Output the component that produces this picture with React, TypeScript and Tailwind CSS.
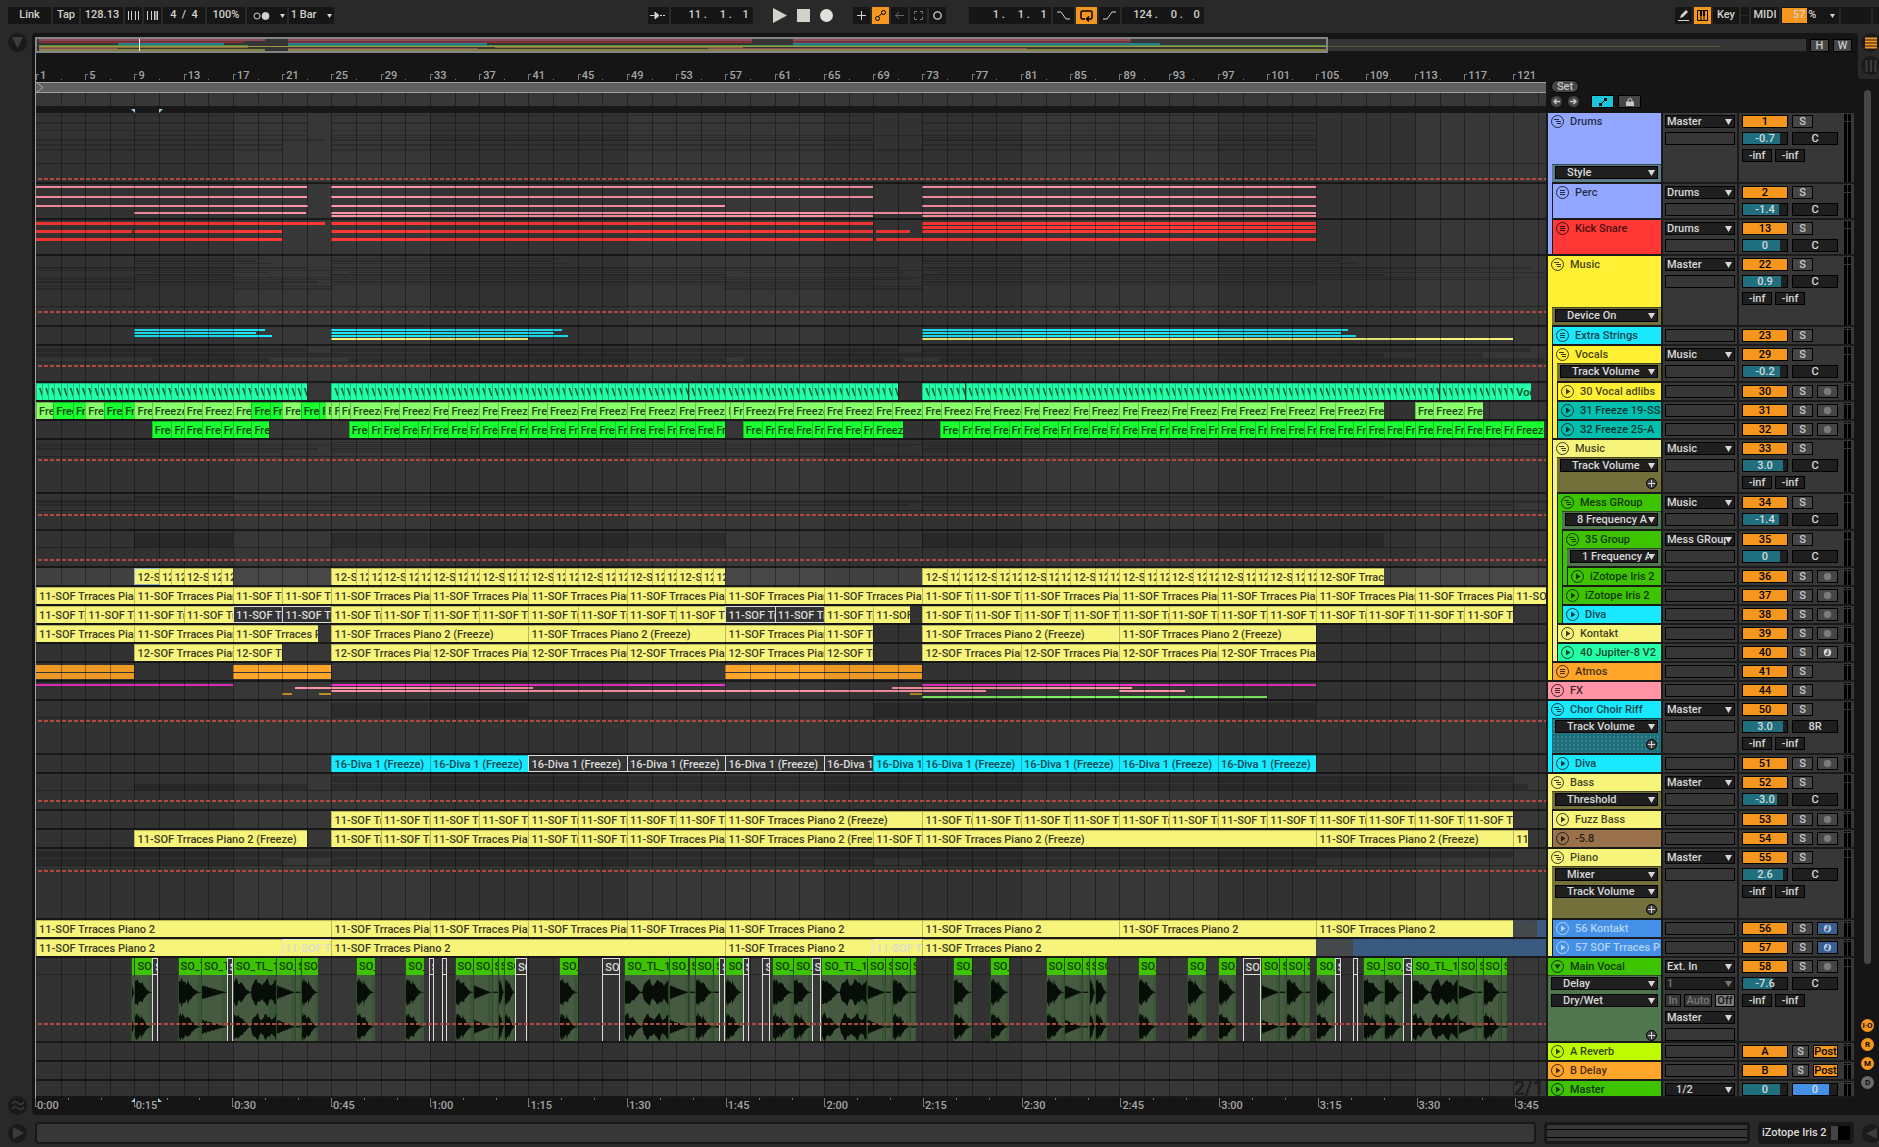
import { ReactNode } from "react";
import clsx from "clsx";

const BARS = 122.65;
const END = BARS + 1;
const pct = (bars: number) => `${(bars / BARS) * 100}%`;
const span = (a: number, b: number) => ({ left: pct(a - 1), width: pct(b - a) });

// short clips only carry the first letters of their name
const fit = (label: string, bars: number) => label.slice(0, Math.ceil(bars * 2.600));

interface Clip {
  a: number;
  b: number;
  label: string;
  tone: string;
}

interface Strip {
  y: number;
  h: number;
  color: string;
  ranges: number[];
}

interface Track {
  name: string;
  num: string;
  depth: number;
  height: string;
  color: string;
  bar?: string;
  icon: "group" | "list" | "play" | "down";
  isGroup?: boolean;
  text?: string;
  auto?: string[];
  autoBg?: string;
  autoTop?: number;
  plus?: boolean;
  line?: number;
  out?: string;
  vol?: string;
  fill?: number;
  pan?: string;
  inf?: boolean;
  arm?: "off" | "note" | "blue";
  kind?: "vocal" | "return" | "master";
  selected?: boolean;
  strips?: Strip[];
  clips?: Clip[];
}

const steps = (a: number, b: number, n: number) => {
  const out: number[] = [];
  for (let x = a; x < b; x += n) out.push(x);
  out.push(b);
  return out;
};

const repeat = (a: number, b: number, offsets: number[], every = 4) => {
  const out: number[] = [];
  for (let x = a; x < b; x += every) {
    offsets.forEach((o) => x + o < b && out.push(x + o));
  }
  out.push(b);
  return out;
};

const run = (label: string, tone: string, bounds: number[]): Clip[] =>
  bounds.slice(1).map((b, i) => ({ a: bounds[i], b, label, tone }));

const st = (color: string, y: number, h: number, ...ranges: number[]): Strip => ({ y, h, color, ranges });

const YELLOW = "bg-[#f7f47c] border-[#b9b65a] text-[#3c3b1c]";
const MINT = "bg-[#22ffa8] border-[#1abf7e] text-[#0b4630]";
const LIME = "bg-[#88ff6a] border-[#62bd4b] text-[#1f4716]";
const NEON = "bg-[#1aff2f] border-[#12bb22] text-[#07430d]";
const CYAN = "bg-[#19e9ff] border-[#12a9ba] text-[#084a52]";
const MUTED = "bg-[#343434] border-[#dcdcdc] border-b text-[#dcdcdc]";
const GHOST = "bg-[#f7f47c] border-[#e2e2e2] text-[#dcdcd0]";
const FROZEN = "bg-[#3a5a80] border-[#3a5a80]";
const HATCH =
  "border-[#3a4658] bg-[repeating-linear-gradient(135deg,#3f4853_0px,#3f4853_3px,#4a4a45_3px,#4a4a45_6px)]";

const DARK = "bg-black/20";
const PINK = "bg-[#ff94a6]";
const RED = "bg-[#ff3836]";
const SKY = "bg-[#19e9ff]";
const ORANGE = "bg-[#ffa529]";
const MAGENTA = "bg-[#f032c8]";

const P11 = "11-SOF Trraces Piano 2 (Freeze)";
const P12 = "12-SOF Trraces Piano 2 (Freeze)";
const PIANO = "11-SOF Trraces Piano 2";

const bgYellow = "bg-[#fff034]";
const bgPale = "bg-[#f7f47c]";
const bgGreen = "bg-[#3dc300]";
const bgCyan = "bg-[#19e9ff]";
const olive = "bg-[#73703b]";

const tracks: Track[] = [
  {
    name: "Drums", num: "1", depth: 0, height: "h-[71px]", color: "bg-[#92a7ff]", icon: "group", isGroup: true,
    auto: ["Style"], autoBg: "bg-[#5b7c8a]", autoTop: 51, line: 65, out: "Master", vol: "-0.7", fill: 84, pan: "C", inf: true,
    strips: [
      st(DARK, 2, 1, 1, 23, 25, 69, 73, 105),
      st(DARK, 9, 2, 1, 23, 25, 69, 73, 105),
      st(DARK, 17, 1, 1, 23.1, 25, 57, 73, 105),
      st(DARK, 22, 1, 9, 22.9, 25, 105),
      st(DARK, 24, 1, 25, 69, 73, 105),
      st(DARK, 26, 2, 1, 24.5, 25, 69, 73, 105),
      st(DARK, 31, 2, 1, 8.8, 9, 21, 25, 69, 73, 105),
      st(DARK, 36, 2, 1, 21, 25, 69, 69.2, 105),
    ],
  },
  {
    name: "Perc", num: "2", depth: 1, height: "h-[36px]", color: "bg-[#92a7ff]", icon: "list",
    out: "Drums", vol: "-1.4", fill: 82, pan: "C",
    strips: [
      st(PINK, 2, 2, 1, 23, 25, 69, 73, 105),
      st(PINK, 12, 2, 1, 23, 25, 69, 73, 105),
      st(PINK, 21, 2, 1, 23.1, 25, 57, 73, 105),
      st(PINK, 28, 2, 9, 22.9, 25, 105),
      st(PINK, 31, 2, 25, 69, 73, 105),
    ],
  },
  {
    name: "Kick Snare", num: "13", depth: 1, height: "h-[36px]", color: "bg-[#ff3836]", icon: "list",
    out: "Drums", vol: "0", fill: 84, pan: "C",
    strips: [
      st(RED, 2, 3, 1, 24.5, 25, 69, 73, 105),
      st(RED, 6, 3, 73, 105),
      st(RED, 10, 3, 1, 8.8, 9, 21, 25, 69, 69.25, 72, 73, 105),
      st(RED, 18, 3, 1, 21, 25, 69, 69.25, 105),
    ],
  },
  {
    name: "Music", num: "22", depth: 0, height: "h-[71px]", color: bgYellow, icon: "group", isGroup: true,
    auto: ["Device On"], autoBg: olive, autoTop: 51, line: 55, out: "Master", vol: "0.9", fill: 86, pan: "C", inf: true,
    strips: [
      st(DARK, 2, 1, 9, 19.6, 25, 43.7, 73, 107.6),
      st(DARK, 4, 2, 9, 18.9, 25, 43.1, 73, 107),
      st(DARK, 7, 1, 9, 20.2, 25, 44.2, 73, 108.2),
      st(DARK, 11, 2, 1, 23, 25, 71, 73, 122.4),
      st(DARK, 14, 1, 1, 110.5, 113, 118.5),
      st(DARK, 16, 1, 10.4, 19.9, 26.4, 57, 58.4, 71.4, 74.4, 123.5),
      st(DARK, 18, 2, 9, 17, 25, 57, 73, 110.5),
      st(DARK, 21, 1, 1, END),
      st(DARK, 23, 1, 1, 72, 73, 121),
      st(DARK, 25, 2, 1, 23.9, 25, 69, 73, 105),
      st(DARK, 28, 1, 9, 21, 25, 69, 73, 105),
      st(DARK, 30, 1, 1, 9, 17, 25, 57, 73),
      st(DARK, 32, 2, 1, 9, 17, 25, 57, 73),
    ],
  },
  {
    name: "Extra Strings", num: "23", depth: 1, height: "h-[19px]", color: bgCyan, icon: "list",
    strips: [
      st(SKY, 2, 2, 9, 19.6, 25, 43.7, 73, 107.6),
      st(SKY, 5, 2, 9, 18.9, 25, 43.1, 73, 107),
      st(SKY, 8, 2, 9, 20.2, 25, 44.2, 73, 108.2),
      st("bg-[#f7f47c]", 11, 2, 25, 41, 73, 121),
    ],
  },
  {
    name: "Vocals", num: "29", depth: 1, height: "h-[37px]", color: bgYellow, icon: "group", isGroup: true,
    auto: ["Track Volume"], autoBg: olive, line: 19, out: "Music", vol: "-0.2", fill: 84, pan: "C",
    strips: [
      st(DARK, 2, 4, 1, 23, 25, 71, 73, 122.4),
      st(DARK, 7, 4, 1, 110.5, 113, 118.5),
      st(DARK, 12, 4, 10.4, 19.9, 26.4, 57, 58.4, 71.4, 74.4, 123.5),
    ],
  },
  {
    name: "30 Vocal adlibs", num: "30", depth: 2, height: "h-[19px]", color: bgYellow, icon: "play", arm: "off",
    clips: [
      ...run("Vocal", MINT, steps(1, 23, 0.5)),
      ...run("Vocal", MINT, steps(25, 71, 0.5)),
      ...run("Vocal", MINT, steps(73, 121, 0.5)),
      ...run("Vocal", MINT, [121, 122.4]),
    ],
  },
  {
    name: "31 Freeze 19-SS", num: "31", depth: 2, height: "h-[19px]", color: "bg-[#00bfaf]", icon: "play", arm: "off",
    clips: [
      ...run("Freeze 19", LIME, [1, 2.4]),
      ...run("Freeze 19", NEON, [2.4, 4, 5]),
      ...run("Freeze 19", LIME, [5, 6.5]),
      ...run("Freeze 19", NEON, [6.5, 8, 9]),
      ...run("Freeze 19", LIME, [9, 10.4, 13, 14.5, 17, 18.5]),
      ...run("Freeze 19", NEON, [18.5, 20, 21]),
      ...run("Freeze 19", LIME, [21, 22.5]),
      ...run("Freeze 19", NEON, [22.5, 24, 24.5]),
      ...run("Freeze 19", LIME, [24.5, 25, 25.6, 26.5]),
      ...run("Freeze 19", LIME, [26.5, ...repeat(29, 57, [0, 1.5])]),
      ...run("Freeze 19", LIME, [57, 57.4, 58.4, ...repeat(61, 109, [0, 1.5]), 110.5]),
      ...run("Freeze 19", LIME, [113, 114.5, 117, 118.5]),
    ],
  },
  {
    name: "32 Freeze 25-A", num: "32", depth: 2, height: "h-[19px]", color: "bg-[#00bfaf]", icon: "play", arm: "off",
    clips: [
      ...run("Freeze 25", NEON, [10.4, 12, 13, 14.5, 16, 17, 18.5, 19.9]),
      ...run("Freeze 25", NEON, [26.4, 28, ...repeat(29, 57, [0, 1.5, 3])]),
      ...run("Freeze 25", NEON, [58.4, 60, ...repeat(61, 69, [0, 1.5, 3]), 71.4]),
      ...run("Freeze 25", NEON, [74.4, 76, ...repeat(77, 121, [0, 1.5, 3]), 123.5]),
    ],
  },
  {
    name: "Music", num: "33", depth: 1, height: "h-[54px]", color: bgPale, icon: "group", isGroup: true,
    auto: ["Track Volume"], autoBg: olive, plus: true, line: 19, out: "Music", vol: "3.0", fill: 92, pan: "C", inf: true,
    strips: [
      st(DARK, 2, 1, 9, 17, 25, 57, 73, 110.5),
      st(DARK, 4, 1, 1, END),
      st(DARK, 6, 1, 1, 72, 73, 121),
      st(DARK, 8, 2, 1, 23.9, 25, 69, 73, 105),
      st(DARK, 11, 1, 9, 21, 25, 69, 73, 105),
    ],
  },
  {
    name: "Mess GRoup", num: "34", depth: 2, height: "h-[37px]", color: bgGreen, icon: "group", isGroup: true,
    auto: ["8 Frequency A"], autoBg: "bg-[#50764e]", line: 20, out: "Music", vol: "-1.4", fill: 82, pan: "C",
    strips: [
      st(DARK, 2, 3, 9, 17, 25, 57, 73, 110.5),
      st(DARK, 6, 3, 1, END),
      st(DARK, 10, 2, 1, 72, 73, 121),
    ],
  },
  {
    name: "35 Group", num: "35", depth: 3, height: "h-[37px]", color: bgGreen, icon: "group", isGroup: true,
    auto: ["1 Frequency A"], autoBg: "bg-[#50764e]", line: 28, out: "Mess GRoup", vol: "0", fill: 84, pan: "C",
    strips: [st(DARK, 2, 14, 9, 17, 25, 57, 73, 110.5)],
  },
  {
    name: "iZotope Iris 2", num: "36", depth: 4, height: "h-[19px]", color: bgGreen, icon: "play", arm: "off", selected: true,
    clips: [
      ...run(P12, "bg-[#f7f47c] border-[#8fb4c8] border-b text-[#3c3b1c]", [9, 11]),
      ...run(P12, YELLOW, [11, 12, 13, 15, 16, 17]),
      ...run(P12, YELLOW, repeat(25, 57, [0, 2, 3])),
      ...run(P12, YELLOW, [...repeat(73, 105, [0, 2, 3]), 110.5]),
    ],
  },
  {
    name: "iZotope Iris 2", num: "37", depth: 3, height: "h-[19px]", color: bgGreen, icon: "play", arm: "off",
    clips: run(P11, YELLOW, [1, 9, 17, 21, 25, 33, 41, 49, 57, 65, 73, 77, 81, 89, 97, 105, 113, 121, END]),
  },
  {
    name: "Diva", num: "38", depth: 3, height: "h-[19px]", color: bgCyan, icon: "play", arm: "off",
    clips: [
      ...run(P11, YELLOW, steps(1, 17, 4)),
      ...run(P11, MUTED, [17, 21, 25]),
      ...run(P11, YELLOW, steps(25, 57, 4)),
      ...run(P11, MUTED, [57, 61, 65]),
      ...run(P11, YELLOW, [65, 69, 72]),
      ...run(P11, YELLOW, steps(73, 121, 4)),
    ],
  },
  {
    name: "Kontakt", num: "39", depth: 2, height: "h-[19px]", color: bgPale, icon: "play", arm: "off",
    clips: [
      ...run(P11, YELLOW, [1, 9, 17, 23.9]),
      ...run(P11, YELLOW, [25, 41, 57, 65, 69]),
      ...run(P11, YELLOW, [73, 89, 105]),
    ],
  },
  {
    name: "40 Jupiter-8 V2", num: "40", depth: 2, height: "h-[19px]", color: "bg-[#25ffa8]", icon: "play", arm: "note",
    clips: [
      ...run(P12, YELLOW, [9, 17, 21]),
      ...run(P12, YELLOW, [25, 33, 41, 49, 57, 65, 69]),
      ...run(P12, YELLOW, [73, 81, 89, 97, 105]),
    ],
  },
  {
    name: "Atmos", num: "41", depth: 1, height: "h-[19px]", color: "bg-[#ffa529]", icon: "list",
    strips: [st(ORANGE, 2, 7, 1, 9, 17, 25, 57, 73), st(ORANGE, 10, 6, 1, 9, 17, 25, 57, 73)],
  },
  {
    name: "FX", num: "44", depth: 0, height: "h-[19px]", color: "bg-[#ff94a6]", icon: "list",
    strips: [
      st(MAGENTA, 2, 2, 1, 17, 25, 57, 73, 105),
      st(PINK, 5, 2, 22, 41.4, 70.5, 90),
      st(PINK, 8, 2, 25, 78.2, 89, 94.3),
      st("bg-[#bd8a24]", 11, 2, 21, 21.8, 24, 25, 72, 73),
      st("bg-[#7cf060]", 14, 2, 73, 101),
    ],
  },
  {
    name: "Chor Choir Riff", num: "50", depth: 0, height: "h-[54px]", color: bgCyan, icon: "group", isGroup: true,
    auto: ["Track Volume"], plus: true, line: 19, out: "Master", vol: "3.0", fill: 92, pan: "8R", inf: true,
    autoBg: "bg-[#1d6f7b] bg-[radial-gradient(#3f7f8a_1px,transparent_1px)] bg-[length:4px_4px]",
    strips: [st(DARK, 2, 14, 25, 41, 69, 105)],
  },
  {
    name: "Diva", num: "51", depth: 1, height: "h-[19px]", color: bgCyan, icon: "play", arm: "off",
    clips: [
      ...run("16-Diva 1 (Freeze)", CYAN, [25, 33, 41]),
      ...run("16-Diva 1 (Freeze)", MUTED, [41, 49, 57, 65, 69]),
      ...run("16-Diva 1 (Freeze)", CYAN, [69, 73, 81, 89, 97, 105]),
    ],
  },
  {
    name: "Bass", num: "52", depth: 0, height: "h-[37px]", color: bgPale, icon: "group", isGroup: true,
    auto: ["Threshold"], autoBg: olive, line: 26, out: "Master", vol: "-3.0", fill: 77, pan: "C",
    strips: [st(DARK, 2, 7, 25, 121), st(DARK, 10, 6, 9, 23, 25, 122.2)],
  },
  {
    name: "Fuzz Bass", num: "53", depth: 1, height: "h-[19px]", color: bgPale, icon: "play", arm: "off",
    clips: run(P11, YELLOW, [...steps(25, 57, 4), ...steps(73, 121, 4)]),
  },
  {
    name: "-5.8", num: "54", depth: 1, height: "h-[19px]", color: "bg-[#99724b]", icon: "play", arm: "off",
    clips: [
      ...run(P11, YELLOW, [9, 23]),
      ...run(P11, YELLOW, [25, 29, 33, 41, 45, 49, 57, 69, 73, 105, 121, 122.2]),
    ],
  },
  {
    name: "Piano", num: "55", depth: 0, height: "h-[71px]", color: bgPale, icon: "group", isGroup: true,
    auto: ["Mixer", "Track Volume"], autoBg: olive, plus: true, line: 21, out: "Master", vol: "2.6", fill: 90, pan: "C", inf: true,
    strips: [st(DARK, 2, 7, 1, 121), st(DARK, 10, 6, 1, 21, 25, 69, 73, 105)],
  },
  {
    name: "56 Kontakt", num: "56", depth: 1, height: "h-[19px]", color: "bg-[#4390e6]", text: "text-[#b4d3f6]", icon: "play", arm: "blue",
    clips: [
      ...run(PIANO, YELLOW, [1, 25]),
      ...run(P11, YELLOW, [25, 33, 41, 49, 57]),
      ...run(PIANO, YELLOW, [57, 73, 89, 105, 121]),
      ...run("", HATCH, [121, 122.9]),
      ...run("", FROZEN, [122.9, END]),
    ],
  },
  {
    name: "57 SOF Trraces P", num: "57", depth: 1, height: "h-[19px]", color: "bg-[#4390e6]", text: "text-[#b4d3f6]", icon: "play", arm: "blue",
    clips: [
      ...run(PIANO, YELLOW, [1, 21]),
      ...run(PIANO, GHOST, [21, 25]),
      ...run(PIANO, YELLOW, [25, 57, 69]),
      ...run(PIANO, GHOST, [69, 73]),
      ...run(PIANO, YELLOW, [73, 105]),
      ...run("", HATCH, [105, 108]),
      ...run("", FROZEN, [108, END]),
    ],
  },
  {
    name: "Main Vocal", num: "58", depth: 0, height: "h-[85px]", color: bgGreen, icon: "down",
    auto: ["Delay", "Dry/Wet"], autoBg: "bg-[#50764e]", plus: true, line: 65, vol: "-7.6", fill: 66, pan: "C", inf: true,
    arm: "off", kind: "vocal",
  },
  { name: "A Reverb", num: "A", depth: 0, height: "h-[19px]", color: "bg-[#bffb00]", icon: "play", kind: "return" },
  { name: "B Delay", num: "B", depth: 0, height: "h-[19px]", color: "bg-[#ffa529]", icon: "play", kind: "return" },
  { name: "Master", num: "", depth: 0, height: "h-[17px]", color: bgGreen, icon: "play", kind: "master", vol: "0", fill: 84 },
];

// start, end, wave: d = decay, w = double hump, s = soft, n = near silence, m = muted
const vocalClips: [number, number, string][] = [
  [8.75, 9, "s"], [9, 10.45, "d"], [10.45, 10.9, "m"], [12.5, 14.4, "d"], [14.4, 16.5, "s"], [16.5, 17, "m"],
  [17, 20.5, "w"], [20.5, 22.05, "s"], [22.05, 22.5, "n"], [22.5, 23.9, "d"], [27, 28.5, "d"], [31, 32.5, "d"],
  [32.9, 33.3, "m"], [34, 34.4, "m"], [35, 36.5, "d"], [36.5, 38, "s"], [38, 38.5, "n"], [38.5, 39, "d"],
  [39, 39.9, "d"], [39.9, 40.9, "m"], [43.5, 45, "d"], [47, 48.4, "m"], [48.8, 52.4, "w"], [52.4, 54, "s"],
  [54, 54.5, "n"], [54.5, 56, "d"], [56, 56.5, "n"], [56.5, 57, "m"], [57, 58.4, "d"], [58.4, 58.9, "m"],
  [60, 60.6, "m"], [60.8, 62.5, "d"], [62.5, 64, "d"], [64, 64.8, "m"], [64.8, 68.5, "w"], [68.5, 70, "s"],
  [70, 70.5, "n"], [70.5, 72, "d"], [72, 72.5, "n"], [75.5, 77, "d"], [78.5, 80, "d"], [83, 84.5, "d"],
  [84.5, 86, "s"], [86, 86.5, "n"], [86.5, 87, "d"], [87, 88, "d"], [90.5, 92, "d"], [94.5, 96, "d"],
  [97, 98.5, "d"], [99, 100.5, "m"], [100.5, 102, "s"], [102, 102.5, "n"], [102.5, 104, "d"], [104, 104.5, "n"],
  [105, 106.5, "d"], [106.5, 107, "m"], [108, 108.4, "m"], [108.8, 110.5, "d"], [110.5, 112, "d"], [112, 112.8, "m"],
  [112.8, 116.5, "w"], [116.5, 118, "s"], [118, 118.5, "n"], [118.5, 120, "d"], [120, 120.5, "n"],
];

const envelope = (kind: string, t: number) => {
  const decay = (x: number) => (x < 0.4 ? 0.85 + 0.15 * Math.sin(x * 14) : Math.max(0.03, 2.4 * (1 - x) * (1 - x)));
  if (kind === "w") return t < 0.43 ? decay(t / 0.43) : 0.55 + 0.45 * Math.sin(((t - 0.43) / 0.57) * Math.PI * 2.4 + 0.2) ** 2;
  if (kind === "s") return Math.max(0.03, 0.55 * (1 - t) ** 1.1);
  if (kind === "n") return 0.05;
  return decay(t);
};

const wavePath = (kind: string, seed: number, mid: number) => {
  const top: string[] = [];
  const bottom: string[] = [];
  for (let i = 0; i <= 30; i++) {
    const t = i / 30;
    const noise = 0.82 + 0.18 * Math.sin(i * 2.7 + seed) * Math.cos(i * 1.3);
    const amp = Math.min(1, envelope(kind, t)) * noise * 15;
    top.push(`${t * 100} ${mid - amp}`);
    bottom.unshift(`${t * 100} ${mid + amp}`);
  }
  return `M${top.join("L")}L${bottom.join("L")}Z`;
};

const VocalClips = () => (
  <>
    {vocalClips.map(([a, b, kind], i) => (
      <div
        key={i}
        className={clsx(
          "absolute inset-y-0 z-10 flex flex-col overflow-hidden border-l",
          kind === "m" ? "border-r border-[#dcdcdc]" : "border-[#2b4a26]"
        )}
        style={span(a, b)}
      >
        <div
          className={clsx(
            "h-[17px] pl-0.5 text-[11px] leading-[17px] whitespace-nowrap",
            kind === "m" ? "border-y border-[#dcdcdc] bg-[#343434] leading-[15px] text-[#dcdcdc]" : "bg-[#3dc300] text-[#123a00]"
          )}
        >
          {fit("SO_TL_1", b - a)}
        </div>
        {kind !== "m" && (
          <svg className="h-0 w-full flex-1 bg-[#455a40]" viewBox="0 0 100 65" preserveAspectRatio="none">
            <rect x="82" width="18" height="65" fill="#3a5537" />
            <path d={wavePath(kind, i, 17)} fill="#070d07" />
            <path d={wavePath(kind, i + 3, 51)} fill="#070d07" />
          </svg>
        )}
      </div>
    ))}
  </>
);

const Lane = ({ track }: { track: Track }) => (
  <div className={clsx("relative mb-0.5 min-w-0 flex-1 overflow-hidden", track.selected ? "bg-[#474747]" : "bg-[#373737]")}>
    {track.strips?.map((s, i) =>
      s.ranges.map(
        (r, j) =>
          j % 2 === 0 && (
            <div
              key={`${i}-${j}`}
              className={clsx("absolute", s.color)}
              style={{ ...span(r, s.ranges[j + 1]), top: s.y, height: s.h }}
            />
          )
      )
    )}
    {track.clips?.map((c, i) => (
      <div
        key={i}
        className={clsx(
          "absolute inset-y-0 z-10 overflow-hidden border-t border-l pl-0.5 text-[11px] leading-[17px] whitespace-nowrap",
          c.tone
        )}
        style={span(c.a, c.b)}
      >
        {fit(c.label, c.b - c.a)}
      </div>
    ))}
    {track.kind === "vocal" && <VocalClips />}
    {track.kind === "master" && (
      <div className="absolute right-0.5 bottom-0 z-10 text-xl leading-4 font-bold text-[#1e1e1e]">2/1</div>
    )}
    {track.auto && <div className="absolute inset-x-0 h-px bg-black/30" style={{ top: track.autoTop ? 50 : 16 }} />}
    {track.line && (
      <div
        className="absolute inset-x-0 z-20 h-0.5 bg-[repeating-linear-gradient(90deg,transparent_0px,transparent_2px,#b04a40_2px,#b04a40_6px)]"
        style={{ top: track.line }}
      />
    )}
  </div>
);

const TrackIcon = ({ icon }: { icon: Track["icon"] }) => (
  <svg className="size-[13px] shrink-0" viewBox="0 0 13 13" fill="none" stroke="currentColor">
    <circle cx="6.5" cy="6.5" r="6" />
    {icon === "group" && <path d="M3 4.5h5M5 6.5h5M6 8.5h4" />}
    {icon === "list" && <path d="M4 4.5h5M4 6.5h5M4 8.5h5" />}
    {icon === "play" && <path d="M5 3.5v6l4.500-3z" fill="currentColor" stroke="none" />}
    {icon === "down" && <path d="M3.500 4.500h6l-3 4.500z" fill="currentColor" stroke="none" />}
  </svg>
);

const Arrow = ({ className }: { className?: string }) => (
  <svg className={clsx("pointer-events-none absolute", className)} width="7" height="6" viewBox="0 0 7 6">
    <path d="M0 0h7L3.500 6z" fill="currentColor" />
  </svg>
);

interface PickProps {
  label: string;
  value: string;
  indent?: string;
  dim?: boolean;
}

const Pick = ({ label, value, indent = "pl-px", dim }: PickProps) => (
  <div className={clsx("relative h-[13px] border border-black bg-[#1f1f1f]", dim ? "text-[#777]" : "text-[#d8d8d8]")}>
    <select
      aria-label={label}
      className={clsx("block h-[11px] w-full appearance-none overflow-hidden bg-transparent pr-2 text-[11px] leading-[11px] outline-none", indent)}
    >
      <option>{value}</option>
    </select>
    <Arrow className="top-[3px] right-0.5" />
  </div>
);

const Blank = () => <div className="h-[13px] shrink-0 border border-black bg-[#373737]" />;

interface CellProps {
  className?: string;
  fill?: number;
  fillColor?: string;
  children?: ReactNode;
}

const Value = ({ className, fill, fillColor = "bg-[#1f6f7e]", children }: CellProps) => (
  <div className={clsx("relative h-[13px] border border-black bg-[#1f1f1f] text-center text-[11px] leading-[12px] text-[#d8d8d8]", className)}>
    {fill !== undefined && <div className={clsx("absolute inset-y-0 left-0", fillColor)} style={{ width: `${fill}%` }} />}
    <span className="relative">{children}</span>
  </div>
);

const Push = ({ className, children, label }: { className: string; children: ReactNode; label?: string }) => (
  <button
    aria-label={label}
    className={clsx("flex h-[13px] items-center justify-center overflow-hidden border border-black text-[11px] leading-[11px]", className)}
  >
    {children}
  </button>
);

const Arm = ({ mode }: { mode: "off" | "note" | "blue" }) => (
  <Push
    label="Arm"
    className={clsx("w-[21px]", mode === "blue" ? "border-[#2c5a94] bg-[#3a5f8f] text-[#a6c8ee]" : "bg-[#464646] text-[#7a7a7a]")}
  >
    <svg width="9" height="9" viewBox="0 0 9 9">
      <circle cx="4.500" cy="4.500" r="3.700" fill={mode === "note" ? "#d8d8d8" : "currentColor"} />
      {mode !== "off" && <path d="M5 1.500v4.500a1 1 0 1 1-1-1.200" stroke="#222" fill="none" />}
    </svg>
  </Push>
);

const Header = ({ track, bars, next }: { track: Track; bars: string[]; next: number }) => (
  <div className="flex w-[113px] shrink-0">
    {bars.map((color, level) => (
      <div key={level} className={clsx("mr-px w-1", color, next <= level && "mb-0.5")} />
    ))}
    {track.isGroup && <div className={clsx("w-1", track.color)} />}
    <div className="mb-0.5 flex min-w-0 flex-1 flex-col">
      <div
        className={clsx(
          "flex items-start gap-1.5 overflow-hidden pt-0.5 pl-[3px] text-[11px] leading-[14px] whitespace-nowrap",
          track.color,
          track.isGroup && "-ml-1",
          track.autoTop ? "h-[51px]" : "h-[17px]",
          !track.auto && "flex-1",
          track.text ?? "text-black/75"
        )}
      >
        <TrackIcon icon={track.icon} />
        <span>{track.name}</span>
      </div>
      {track.auto && (
        <div className={clsx("flex flex-1 flex-col gap-1 border-t border-black/40 px-[3px] pt-px", track.autoBg)}>
          {track.auto.map((name) => (
            <Pick key={name} label={`${track.name} automation`} value={name} indent="pl-[11px]" />
          ))}
          {track.plus && (
            <button
              aria-label="Add automation lane"
              className={clsx(
                "mt-auto mr-px ml-auto flex size-[11px] items-center justify-center rounded-full border border-black bg-[#464646] text-[#d8d8d8]",
                !track.kind && "mb-[3px]"
              )}
            >
              <svg width="7" height="7" viewBox="0 0 7 7" stroke="currentColor">
                <path d="M3.500 0v7M0 3.500h7" />
              </svg>
            </button>
          )}
        </div>
      )}
    </div>
  </div>
);

const RoutingColumn = ({ track }: { track: Track }) => (
  <div className="mb-0.5 flex w-[74px] shrink-0 flex-col gap-1 overflow-hidden bg-[#373737] px-0.5 pt-0.5">
    {track.kind === "vocal" ? (
      <>
        <Pick label="Input type" value="Ext. In" />
        <Pick label="Input channel" value="1" dim />
        <div className="flex justify-between">
          <Push className="w-4 bg-[#373737] text-[#777]">In</Push>
          <Push className="w-7 bg-[#373737] text-[#777]">Auto</Push>
          <Push className="w-5 bg-[#7d7d7d] text-[#111]">Off</Push>
        </div>
        <Pick label="Output" value="Master" />
        <Blank />
      </>
    ) : track.kind === "master" ? (
      <Pick label="Master out" value="1/2" indent="pl-[10px]" />
    ) : (
      <>
        {track.out && <Pick label={`${track.name} output`} value={track.out} />}
        <Blank />
      </>
    )}
  </div>
);

const MixerColumn = ({ track }: { track: Track }) => {
  const small = !track.vol || track.kind === "master";
  return (
    <div className="mb-0.5 flex flex-1 justify-between overflow-hidden bg-[#373737] pr-[3px] pl-[3px]">
      <div className="flex flex-col gap-1 pt-0.5">
        {track.kind === "master" ? (
          <div className="flex gap-1">
            <Value className="w-[46px]" fill={84}>0</Value>
            <Value className="w-[46px]" fill={82} fillColor="bg-[#4390e6]">0</Value>
          </div>
        ) : (
          <div className="flex gap-1">
            <Push className="w-[46px] bg-[#f5961e] text-black">{track.num}</Push>
            <Push className={clsx("bg-[#464646] text-[#c8c8c8]", track.kind === "return" ? "w-[17px]" : "w-[21px]")}>S</Push>
            {track.kind === "return" && <Push className="w-[25px] bg-[#f5961e] text-black">Post</Push>}
            {track.arm && <Arm mode={track.arm} />}
          </div>
        )}
        {track.pan && (
          <div className="flex gap-1">
            <Value className="w-[46px]" fill={track.fill}>{track.vol}</Value>
            <Value className="w-[46px]">{track.pan}</Value>
          </div>
        )}
        {track.inf && (
          <div className="flex gap-[3px]">
            <Value className="w-[30px]">-inf</Value>
            <Value className="w-[30px]">-inf</Value>
          </div>
        )}
      </div>
      <div className="flex gap-px pt-px">
        {[0, 1].map((i) => (
          <div key={i} className={clsx("w-[3px] bg-black", small ? "pt-px" : "pt-[7px]")}>
            <div className="h-px bg-[#373737]" />
          </div>
        ))}
      </div>
    </div>
  );
};

const TrackRows = () => {
  const parents: string[] = [];
  return (
    <>
      {tracks.map((track, i) => {
        const bars = parents.slice(0, track.depth);
        parents[track.depth] = track.color;
        return (
          <div key={i} className={clsx("flex", track.height)}>
            <Lane track={track} />
            <div className="flex w-[308px] shrink-0 gap-0.5 pl-0.5">
              <Header track={track} bars={bars} next={tracks[i + 1]?.depth ?? 0} />
              <RoutingColumn track={track} />
              <MixerColumn track={track} />
            </div>
          </div>
        );
      })}
    </>
  );
};

const Grid = () => (
  <div className="pointer-events-none absolute inset-y-0 right-[308px] left-0 z-[5]">
    {[1, 33, 65, 97].map((b) => (
      <div key={b} className="absolute inset-y-0 bg-black/8" style={span(b, b + 16)} />
    ))}
    {steps(3, 123, 2).map((b) => (
      <div key={b} className="absolute inset-y-0 w-px bg-black/35" style={{ left: pct(b - 1) }} />
    ))}
  </div>
);

const Box = ({ className, children, label }: { className: string; children?: ReactNode; label?: string }) => (
  <button
    aria-label={label}
    className={clsx("flex h-[17px] shrink-0 items-center justify-center bg-[#161616] text-[11px] whitespace-pre text-[#d2d2ca]", className)}
  >
    {children}
  </button>
);

const Position = ({ parts }: { parts: [string, string, string] }) => (
  <Box className="w-[82px] pr-1 text-right">
    <span className="flex-1">{parts[0]} .</span>
    <span className="w-[25px]">{parts[1]} .</span>
    <span className="w-[17px]">{parts[2]}</span>
  </Box>
);

const Caret = () => (
  <svg width="5" height="4" viewBox="0 0 5 4">
    <path d="M0 0h5L2.500 4z" fill="currentColor" />
  </svg>
);

const stroke = { fill: "none", stroke: "currentColor" };

const TopBar = () => (
  <header className="flex h-[33px] items-center overflow-hidden pb-0.5 pl-2">
    <div className="flex w-[34.200%] shrink-0 gap-0.5">
      <Box className="w-[43px]">Link</Box>
      <Box className="w-[26px]">Tap</Box>
      <Box className="w-[42px]">128.13</Box>
      <Box className="w-[17px]" label="Nudge down">
        <svg width="11" height="9" {...stroke}><path d="M.5 0v9M3.500 0v9M7.500 0v9M10.500 0v9" /></svg>
      </Box>
      <Box className="w-[17px]" label="Nudge up">
        <svg width="11" height="9" {...stroke}><path d="M.5 0v9M4.500 0v9M7.500 0v9M10.500 0v9M9 0v9" /></svg>
      </Box>
      <Box className="w-[42px]">4  /  4</Box>
      <Box className="w-[38px]">100%</Box>
      <Box className="w-[40px] gap-2.5 pl-1" label="Metronome">
        <svg width="17" height="8" {...stroke}>
          <circle cx="4" cy="4" r="3" />
          <circle cx="12.500" cy="4" r="3.500" fill="currentColor" />
        </svg>
        <Caret />
      </Box>
      <Box className="w-[45px] gap-2">1 Bar <Caret /></Box>
    </div>
    <div className="flex shrink-0 items-center gap-0.5">
      <Box className="w-[21px]" label="Follow">
        <svg width="16" height="9" {...stroke}><path d="M0 4.500h5M10 4.500h2M13 4.500h2" /><path d="M5 1v7l4-3.500z" fill="currentColor" /></svg>
      </Box>
      <Position parts={["11", "1", "1"]} />
      <div className="flex items-center gap-2.5 pr-[15px] pl-[18px] text-[#d2d2ca]">
        <button aria-label="Play"><svg className="block" width="14" height="15"><path d="M0 0v15L14 7.500z" fill="currentColor" /></svg></button>
        <button aria-label="Stop" className="size-[13px] bg-[#d2d2ca]" />
        <button aria-label="Record" className="size-[13px] rounded-full bg-[#e0e0dc]" />
      </div>
      <div className="w-px" />
      <Box className="w-[17px]" label="Overdub"><svg width="9" height="9" {...stroke}><path d="M4.500 0v9M0 4.500h9" /></svg></Box>
      <Box className="w-[17px] !bg-[#f5961e] text-black!" label="Automation arm">
        <svg width="11" height="11" {...stroke}><circle cx="2.500" cy="8.500" r="2" /><circle cx="8.500" cy="2.500" r="2" /><path d="M3.500 6.500l3.500-3" /></svg>
      </Box>
      <Box className="w-[17px] text-[#666]!" label="Re-enable automation">
        <svg width="9" height="9" {...stroke}><path d="M0 4.500h9M4 1L.8 4.500 4 8" /></svg>
      </Box>
      <Box className="w-[17px] text-[#777]!" label="Capture">
        <svg width="9" height="9" {...stroke}><path d="M.5 3V.5H3M6 .5h2.500V3M8.500 6v2.500H6M3 8.500H.5V6" /></svg>
      </Box>
      <Box className="w-[17px]" label="Session record"><svg width="9" height="9" {...stroke}><circle cx="4.500" cy="4.500" r="3.700" strokeWidth="1.300" /></svg></Box>
      <div className="w-[19px]" />
      <Position parts={["1", "1", "1"]} />
      <Box className="w-[21px]" label="Punch in"><svg width="13" height="9" {...stroke}><path d="M0 1h4l5 7h4" /></svg></Box>
      <Box className="w-[21px] !bg-[#f5961e] text-black!" label="Loop">
        <svg width="13" height="12" {...stroke} strokeWidth="1.500"><path d="M5 9H2.500q-1.500 0-1.500-1.500v-5Q1 1 2.500 1h8Q12 1 12 2.500v5Q12 9 10.500 9H7M9 6.500L6.500 9 9 11.500" /></svg>
      </Box>
      <Box className="w-[21px]" label="Punch out"><svg width="13" height="9" {...stroke}><path d="M0 8h4l5-7h4" /></svg></Box>
      <Position parts={["124", "0", "0"]} />
    </div>
    <div className="ml-auto flex shrink-0 gap-0.5">
      <Box className="w-[17px]" label="Draw mode">
        <svg width="11" height="11"><path d="M2 8l1-3 5-5 2 2-5 5z" fill="currentColor" /><path d="M0 10.500h11" stroke="currentColor" /></svg>
      </Box>
      <Box className="w-[17px] !bg-[#f5961e] text-black!" label="Computer keyboard">
        <svg width="11" height="11" {...stroke}><path d="M.5.5h10v10H.5zM4 5.500v5M7 5.500v5" /><path d="M4 0v6M7 0v6" strokeWidth="2" /></svg>
      </Box>
      <Box className="w-[26px]">Key</Box>
      <div className="flex h-[17px] w-2 flex-col justify-center bg-[#161616]"><div className="h-px bg-[#292929]" /></div>
      <Box className="w-[28px]">MIDI</Box>
      <div className="relative flex h-[17px] w-[58px] items-center justify-between bg-[#161616] pr-1 pl-3 text-[11px] text-[#d2d2ca]">
        <div className="absolute inset-y-px left-px w-[25px] bg-[#f5961e]" />
        <span className="relative">57 %</span>
        <Caret />
      </div>
      <div className="h-[17px] w-[30px] bg-[#161616]" />
      <div className="h-[17px] w-1.5 bg-[#161616]" />
    </div>
  </header>
);

// color, top, height, then start/end pairs in percent
const overview: [string, number, number, number[]][] = [
  ["bg-[#8b4a58]", 2, 2, [0.2, 13, 14.3, 40.5, 42.8, 61.9]],
  ["bg-[#6e3038]", 4, 1, [0.2, 11.8, 14.3, 40.5, 42.8, 61.9]],
  ["bg-[#8f3434]", 5, 1, [0.2, 11.8, 14.3, 40.5, 42.8, 61.9]],
  ["bg-[#1f7e92]", 6, 2, [4.7, 10.7, 14.3, 25.5, 42.8, 63.500]],
  ["bg-[#4a8f4e]", 8, 1, [0.2, 12, 14.3, 72.9]],
  ["bg-[#9c9a42]", 9, 1, [0.2, 72.9]],
  ["bg-[#55553c]", 9, 1, [73, 95.2]],
  ["bg-[#8a6a34]", 10, 1, [0.2, 12, 26, 40]],
  ["bg-[#8a4a66]", 11, 1, [0.2, 4.7, 14.3, 25, 38, 56]],
  ["bg-[#85853c]", 12, 2, [0.2, 13, 14.3, 72.9]],
];

const Overview = () => (
  <div className="mr-0.5 flex h-4 items-center gap-1">
    <div className="relative h-4 flex-1">
      <div className="absolute inset-x-0 inset-y-0.5 bg-[#353535]" />
      {overview.map(([color, top, height, ranges], i) =>
        ranges.map(
          (r, j) =>
            j % 2 === 0 && (
              <div
                key={`${i}-${j}`}
                className={clsx("absolute", color)}
                style={{ top, height, left: `${r}%`, width: `${ranges[j + 1] - r}%` }}
              />
            )
        )
      )}
      <div className="absolute inset-y-0 left-0 w-[73%] border-2 border-[#858585]" />
      <div className="absolute inset-y-0.5 left-[5.900%] w-px bg-white" />
    </div>
    <Push className="w-[19px] bg-[#464646] text-[#c8c8c8]">H</Push>
    <Push className="w-[19px] bg-[#464646] text-[#c8c8c8]">W</Push>
  </div>
);

const BarRuler = () => (
  <div className="min-w-0 flex-1">
    <div className="relative h-[29px] overflow-hidden text-[11px] leading-[9px] text-[#a6a6a6]">
      {steps(1, 121, 4).map((b) => (
        <div key={b} className="absolute bottom-0.5 flex items-end" style={{ left: pct(b - 1) }}>
          <div className="h-1.5 w-[3px] border-t border-l border-[#777]" />
          <span className="pl-px">{b}</span>
        </div>
      ))}
      {steps(3, 119, 4).map((b) => (
        <div key={b} className="absolute bottom-0.5 size-px bg-[#777]" style={{ left: pct(b - 1) }} />
      ))}
    </div>
    <div className="h-[11px] border-y border-[#a0a0a0] bg-[#606060]">
      <svg className="block" width="8" height="9" fill="none" stroke="#a8a8a8"><path d="M1 0l6 4.500L1 9" /></svg>
    </div>
    <div className="relative h-[13px] bg-[#373737]">
      {steps(3, 123, 2).map((b) => (
        <div key={b} className="absolute inset-y-0 w-px bg-black/35" style={{ left: pct(b - 1) }} />
      ))}
    </div>
    <div className="relative h-[7px] bg-[#181818] text-[#9ccbe6]">
      <svg className="absolute bottom-0 -ml-[3px]" style={{ left: pct(8) }} width="4" height="4"><path d="M0 0h4v4z" fill="currentColor" /></svg>
      <svg className="absolute bottom-0" style={{ left: pct(10) }} width="4" height="4"><path d="M0 0h4L0 4z" fill="currentColor" /></svg>
    </div>
  </div>
);

const LocatorBar = () => (
  <div className="flex w-[308px] shrink-0 flex-col items-start gap-0.5 pt-[27px] pl-[5px] text-[#c8c8c8]">
    <Push className="w-7 rounded-full bg-[#464646]">Set</Push>
    <div className="flex items-center">
      <button aria-label="Previous locator" className="mr-1.5 flex size-[11px] items-center justify-center rounded-full bg-[#464646]">
        <svg width="7" height="7" {...stroke} strokeWidth="1.500"><path d="M7 3.500H1M3.500 1L1 3.500 3.500 6" /></svg>
      </button>
      <button aria-label="Next locator" className="mr-3 flex size-[11px] items-center justify-center rounded-full bg-[#464646]">
        <svg width="7" height="7" {...stroke} strokeWidth="1.500"><path d="M0 3.500h6M3.500 1L6 3.500 3.500 6" /></svg>
      </button>
      <Push label="Automation mode" className="mr-1 w-[23px] bg-[#1cc4dc] text-black">
        <svg width="8" height="8" stroke="currentColor"><path d="M1.500 6.500l5-5" /><path d="M0 5h3v3H0zM5 0h3v3H5z" fill="currentColor" stroke="none" /></svg>
      </Push>
      <Push label="Lock envelopes" className="w-[23px] bg-[#464646]">
        <svg width="8" height="8"><path d="M0 3.500h8V8H0z" fill="currentColor" /><path d="M2 4V2.500a2 2 0 0 1 4 0V4" fill="none" stroke="currentColor" /></svg>
      </Push>
    </div>
  </div>
);

const TimeRuler = () => (
  <div className="relative mr-[308px] h-[17px] overflow-hidden text-[11px] leading-[14px] text-[#a6a6a6]">
    {steps(0, 45, 1).map((n) => (
      <div key={n} className="absolute top-0 flex" style={{ left: pct(n * 2.67) }}>
        <div className={clsx("border-l border-[#777]", n % 3 === 0 ? "h-[9px] w-0.5 border-b" : "h-0.5 w-px")} />
        {n % 3 === 0 && (
          <span className="pt-px">{`${Math.floor(n / 12)}:${String((n * 5) % 60).padStart(2, "0")}`}</span>
        )}
      </div>
    ))}
    <svg className="absolute top-0 -ml-[3px] text-[#9ccbe6]" style={{ left: pct(8) }} width="4" height="4"><path d="M4 0v4H0z" fill="currentColor" /></svg>
    <svg className="absolute top-0 text-[#9ccbe6]" style={{ left: pct(10) }} width="4" height="4"><path d="M0 0v4h4z" fill="currentColor" /></svg>
  </div>
);

const Round = ({ label, children }: { label: string; children: ReactNode }) => (
  <button aria-label={label} className="flex size-[19px] shrink-0 items-center justify-center rounded-full bg-[#1a1a1a] text-[#3c3c3c]">
    {children}
  </button>
);

const Toggle = ({ children, on = true }: { children: ReactNode; on?: boolean }) => (
  <button
    className={clsx(
      "flex size-[13px] items-center justify-center rounded-full text-[8px] leading-none font-semibold text-black",
      on ? "bg-[#f5961e]" : "bg-[#6a6a6a]"
    )}
  >
    {children}
  </button>
);

const RightStrip = () => (
  <div className="flex w-[21px] shrink-0 flex-col bg-[#151515]">
    <div className="flex h-[46px] flex-col gap-1 overflow-hidden rounded-bl bg-[#292929] pl-[3px]">
      <Round label="Arrangement view">
        <svg width="12" height="12"><path d="M0 1.500h12M0 4.500h12M0 7.500h12M0 10.500h12" stroke="#f5961e" strokeWidth="2" /></svg>
      </Round>
      <Round label="Session view">
        <svg width="12" height="12"><path d="M1.500 0v12M6 0v12M10.500 0v12" stroke="#3c3c3c" strokeWidth="2" /></svg>
      </Round>
    </div>
    <div className="mt-[11px] ml-1.5 h-[874px] w-[7px] rounded-full bg-[#464646]" />
    <div className="mt-auto mb-[26px] flex flex-col gap-1.5 pl-[3px]">
      <Toggle>I·O</Toggle>
      <Toggle>R</Toggle>
      <Toggle>M</Toggle>
      <Toggle on={false}>D</Toggle>
    </div>
  </div>
);

const Footer = () => (
  <footer className="flex h-8 items-center pt-1 pl-2">
    <Round label="Show clip view"><svg width="12" height="12"><path d="M1 0v12l11-6z" fill="currentColor" /></svg></Round>
    <div className="ml-2 h-[22px] flex-1 rounded border-2 border-[#181818] bg-[#373737]" />
    <div className="ml-2 flex h-[22px] w-[206px] shrink-0 flex-col justify-center gap-[7px] rounded border-[3px] border-[#181818] bg-[#373737]">
      <div className="h-px bg-black" />
      <div className="h-px bg-black" />
    </div>
    <div className="ml-2 flex h-[22px] w-24 shrink-0 items-center justify-between rounded bg-[#181818] px-1 text-[11px] font-medium text-[#dcdcdc]">
      <span>iZotope Iris 2</span>
      <div className="h-[14px] w-[19px] border-l-[7px] border-[#444] bg-black" />
    </div>
    <div className="ml-2 w-[17px] shrink-0 overflow-hidden">
      <Round label="Hide"><svg width="11" height="11"><path d="M11 0v11L0 5.500z" fill="currentColor" /></svg></Round>
    </div>
  </footer>
);

export default function App() {
  return (
    <div className="flex min-h-screen flex-col bg-[#292929] font-['Roboto','Liberation_Sans',sans-serif] font-medium text-[#d2d2ca]">
      <TopBar />
      <div className="flex">
        <div className="flex w-8 shrink-0 flex-col justify-between pl-2">
          <Round label="Show browser"><svg width="11" height="11"><path d="M0 0h11L5.500 11z" fill="currentColor" /></svg></Round>
          <Round label="Groove pool">
            <svg width="12" height="9" {...stroke} strokeWidth="1.500"><path d="M0 3q3-4 6-1t6-1M0 8q3-4 6-1t6-1" /></svg>
          </Round>
        </div>
        <main className="min-w-0 flex-1 rounded-l rounded-tr bg-[#151515] pt-1 pr-1 pl-[3px]">
          <Overview />
          <div className="relative flex border-l border-[#a0a0a0]">
            <BarRuler />
            <LocatorBar />
          </div>
          <div className="relative border-l border-[#a0a0a0] bg-[#1a1a1a]">
            <Grid />
            <TrackRows />
          </div>
          <TimeRuler />
        </main>
        <RightStrip />
      </div>
      <Footer />
    </div>
  );
}
